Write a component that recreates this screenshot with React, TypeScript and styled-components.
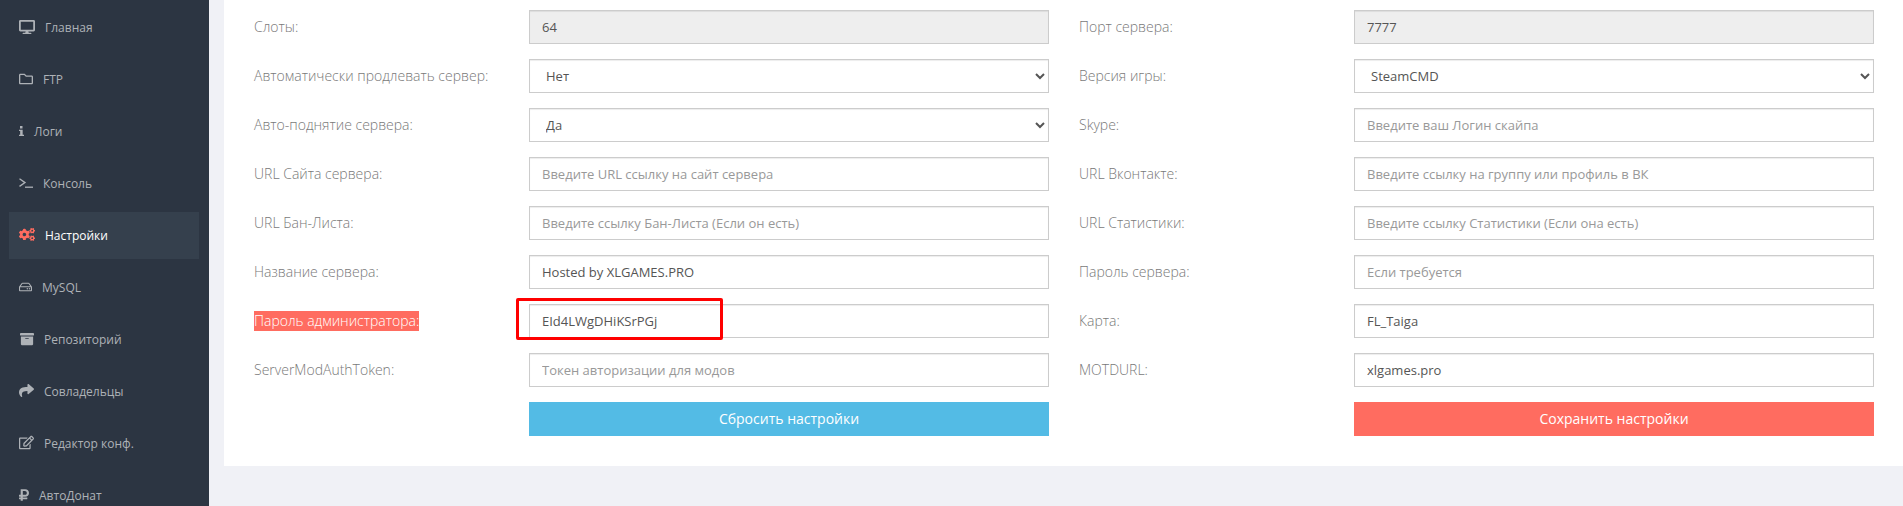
import { ReactNode } from 'react'
import styled, { createGlobalStyle } from 'styled-components'
import {
  FaArchive,
  FaCogs,
  FaDesktop,
  FaRegEdit,
  FaRegFolder,
  FaRegHdd,
  FaRubleSign,
  FaShare,
} from 'react-icons/fa'

const GlobalStyle = createGlobalStyle`
  html, body {
    margin: 0;
    padding: 0;
    height: 506px;
    overflow: hidden;
    background: #f0f1f6;
    font-family: "Open Sans", "Liberation Sans", sans-serif;
  }
  * {
    box-sizing: border-box;
  }
`

function TerminalIcon() {
  return (
    <svg width="14" height="10" viewBox="0 0 14 10" fill="none" stroke="currentColor" strokeWidth="1.3">
      <path d="M0.5 0.8 L6 4.6 L0.5 8.4" />
      <path d="M6 9.2 H14" />
    </svg>
  )
}

function InfoIcon() {
  return (
    <svg width="6" height="12" viewBox="0 0 6 12" fill="currentColor">
      <rect x="1.2" y="0" width="3" height="3" />
      <path d="M0 4.5 H4.4 V10.5 H6 V12 H0 V10.5 H1.4 V6 H0 Z" />
    </svg>
  )
}

type NavEntry = { label: string; icon: ReactNode; width: number; active?: boolean }

const navItems: NavEntry[] = [
  { label: 'Главная', icon: <FaDesktop size={16} />, width: 16 },
  { label: 'FTP', icon: <FaRegFolder size={14} />, width: 14 },
  { label: 'Логи', icon: <InfoIcon />, width: 5 },
  { label: 'Консоль', icon: <TerminalIcon />, width: 14 },
  { label: 'Настройки', icon: <FaCogs size={17} />, width: 16, active: true },
  { label: 'MySQL', icon: <FaRegHdd size={14} />, width: 13 },
  { label: 'Репозиторий', icon: <FaArchive size={14} />, width: 15 },
  { label: 'Совладельцы', icon: <FaShare size={15} />, width: 15 },
  { label: 'Редактор конф.', icon: <FaRegEdit size={15} />, width: 15 },
  { label: 'АвтоДонат', icon: <FaRubleSign size={14} />, width: 10 },
]

type Field =
  | { label: string; kind: 'disabled'; value: string }
  | { label: string; kind: 'select'; value: string }
  | { label: string; kind: 'input'; value?: string; placeholder?: string; alert?: boolean }

const leftFields: Field[] = [
  { label: 'Слоты:', kind: 'disabled', value: '64' },
  { label: 'Автоматически продлевать сервер:', kind: 'select', value: 'Нет' },
  { label: 'Авто-поднятие сервера:', kind: 'select', value: 'Да' },
  { label: 'URL Сайта сервера:', kind: 'input', placeholder: 'Введите URL ссылку на сайт сервера' },
  { label: 'URL Бан-Листа:', kind: 'input', placeholder: 'Введите ссылку Бан-Листа (Если он есть)' },
  { label: 'Название сервера:', kind: 'input', value: 'Hosted by XLGAMES.PRO' },
  { label: 'Пароль администратора:', kind: 'input', value: 'EId4LWgDHiKSrPGj', alert: true },
  { label: 'ServerModAuthToken:', kind: 'input', placeholder: 'Токен авторизации для модов' },
]

const rightFields: Field[] = [
  { label: 'Порт сервера:', kind: 'disabled', value: '7777' },
  { label: 'Версия игры:', kind: 'select', value: 'SteamCMD' },
  { label: 'Skype:', kind: 'input', placeholder: 'Введите ваш Логин скайпа' },
  { label: 'URL Вконтакте:', kind: 'input', placeholder: 'Введите ссылку на группу или профиль в ВК' },
  { label: 'URL Статистики:', kind: 'input', placeholder: 'Введите ссылку Статистики (Если она есть)' },
  { label: 'Пароль сервера:', kind: 'input', placeholder: 'Если требуется' },
  { label: 'Карта:', kind: 'input', value: 'FL_Taiga' },
  { label: 'MOTDURL:', kind: 'input', value: 'xlgames.pro' },
]

function FieldControl({ field }: { field: Field }) {
  if (field.kind === 'select') {
    return (
      <SelectBox defaultValue={field.value}>
        <option>{field.value}</option>
      </SelectBox>
    )
  }
  if (field.kind === 'disabled') {
    return <TextInput disabled defaultValue={field.value} />
  }
  return <TextInput defaultValue={field.value} placeholder={field.placeholder} />
}

function FormColumn({ fields, button, color }: { fields: Field[]; button: string; color: string }) {
  return (
    <Column>
      {fields.map((field) => (
        <Row key={field.label}>
          <LabelCell>
            <Label $alert={field.kind === 'input' && field.alert}>{field.label}</Label>
          </LabelCell>
          <ControlCell>
            <FieldControl field={field} />
            {field.kind === 'input' && field.alert && <Callout />}
          </ControlCell>
        </Row>
      ))}
      <Row>
        <span />
        <ActionButton $color={color}>{button}</ActionButton>
      </Row>
    </Column>
  )
}

export default function App() {
  return (
    <Layout>
      <GlobalStyle />
      <Sidebar>
        {navItems.map((item) => (
          <NavItem key={item.label} $active={item.active}>
            <NavIcon $width={item.width} $active={item.active}>
              {item.icon}
            </NavIcon>
            {item.label}
          </NavItem>
        ))}
      </Sidebar>
      <Main>
        <Card>
          <FormColumn fields={leftFields} button="Сбросить настройки" color="#53bbe5" />
          <FormColumn fields={rightFields} button="Сохранить настройки" color="#ff6c60" />
        </Card>
      </Main>
    </Layout>
  )
}

const Layout = styled.div`
  display: flex;
  height: 506px;
  overflow: hidden;
`

const Sidebar = styled.nav`
  display: flex;
  flex-direction: column;
  flex: 0 0 209px;
  row-gap: 5px;
  padding: 4px 10px 0 9px;
  background: #2c3542;
`

const NavItem = styled.a<{ $active?: boolean }>`
  display: flex;
  flex: 0 0 47px;
  align-items: center;
  column-gap: 10px;
  padding-left: 10px;
  font-size: 12px;
  color: ${(p) => (p.$active ? '#ffffff' : '#aeb2b7')};
  background: ${(p) => (p.$active ? '#35404d' : 'transparent')};
`

const NavIcon = styled.span<{ $width: number; $active?: boolean }>`
  display: flex;
  align-items: center;
  justify-content: center;
  width: ${(p) => p.$width}px;
  padding-bottom: 2px;
  color: ${(p) => (p.$active ? '#ff6c60' : '#aeb2b7')};
`

const Main = styled.main`
  flex: 1;
  padding-left: 15px;
`

const Card = styled.section`
  display: grid;
  grid-template-columns: 795px 795px;
  column-gap: 30px;
  height: 466px;
  padding: 10px 29px 0 30px;
  background: #ffffff;
`

const Column = styled.div`
  display: flex;
  flex-direction: column;
  row-gap: 15px;
`

const Row = styled.div`
  display: grid;
  grid-template-columns: 275px 520px;
  align-items: center;
  height: 34px;
`

const LabelCell = styled.div`
  line-height: 20px;
`

const Label = styled.span<{ $alert?: boolean }>`
  display: inline-block;
  height: 20px;
  padding-bottom: 1px;
  font-size: 14px;
  font-weight: 300;
  line-height: 19px;
  vertical-align: top;
  color: ${(p) => (p.$alert ? '#ffffff' : '#797979')};
  background: ${(p) => (p.$alert ? '#ff6c60' : 'transparent')};
`

const ControlCell = styled.div`
  position: relative;
  height: 34px;
`

const TextInput = styled.input`
  display: block;
  width: 100%;
  height: 34px;
  padding: 6px 12px;
  font-family: inherit;
  font-size: 13px;
  color: #555555;
  background: #ffffff;
  border: 1px solid #cccccc;
  border-radius: 0;
  box-shadow: inset 0 1px 1px rgba(0, 0, 0, 0.075);
  outline: none;

  &::placeholder {
    color: #999999;
    opacity: 1;
  }

  &:disabled {
    background: #eeeeee;
    color: #555555;
  }
`

const SelectBox = styled.select`
  display: block;
  width: 100%;
  height: 34px;
  padding: 6px 12px;
  font-family: inherit;
  font-size: 13px;
  color: #555555;
  background: #ffffff;
  border: 1px solid #cccccc;
  border-radius: 0;
  box-shadow: inset 0 1px 1px rgba(0, 0, 0, 0.075);
  outline: none;
`

const Callout = styled.div`
  position: absolute;
  top: -6px;
  left: -13px;
  width: 207px;
  height: 42px;
  border: 3px solid #ff0000;
  border-radius: 2px;
  pointer-events: none;
`

const ActionButton = styled.button<{ $color: string }>`
  height: 34px;
  padding: 5px 12px 7px;
  font-family: inherit;
  font-size: 14px;
  color: #ffffff;
  background: ${(p) => p.$color};
  border: none;
  border-radius: 0;
`
